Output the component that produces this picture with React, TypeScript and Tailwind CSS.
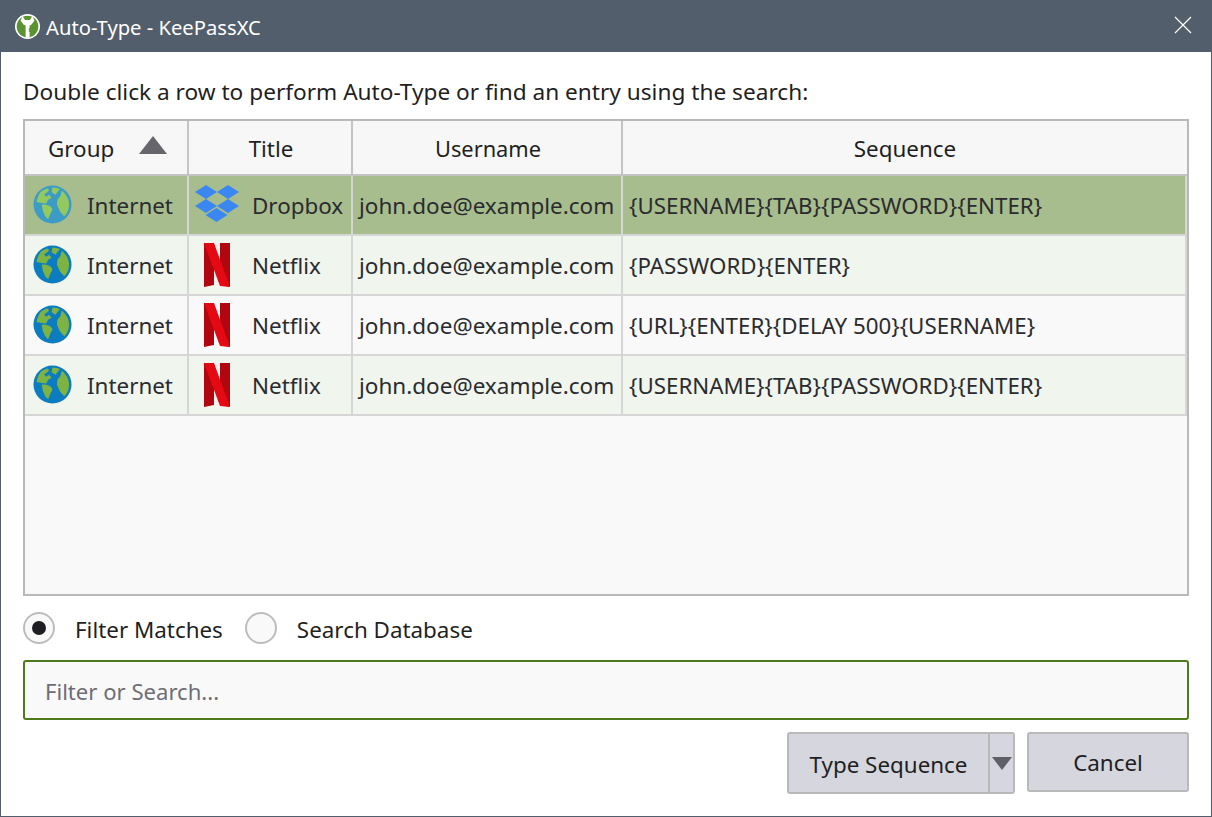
import React from 'react';

const Logo = () => (
  <svg width="25" height="25" viewBox="0 0 25 25">
    <circle cx="12.5" cy="12.5" r="12.5" fill="#fff" />
    <circle cx="12.5" cy="12.5" r="10.8" fill="#5b9330" />
    <path d="M7.6 2 L10 6 L15 6 L17.4 2 L19.4 6.5 L16.6 10.4 L14.6 11.6 L14.6 14 L13.4 15 L14.6 16 L13.4 17 L14.6 18 L14.6 23.4 L10.6 23.4 L10.6 11.6 L8.4 10.4 L5.6 6.5 Z" fill="#fff" />
  </svg>
);

const Globe = ({ selected }: { selected?: boolean }) => {
  const sea = selected ? '#3d9cc5' : '#0b7cbf';
  const land = selected ? '#93c95f' : '#7cb342';
  return (
    <svg width="39" height="39" viewBox="0 0 40 40" className="shrink-0 mt-[-1px]">
      <circle cx="20" cy="20" r="19.5" fill={sea} />
      <path d="M20 2.5 C23 2.5 26 3.4 27.5 4.2 L23 10 L19 7.5 Z" fill={land} />
      <path d="M8 7 C10 5 12.5 4 15 3.5 L16.5 5.5 L14 8 L11.5 9.5 L13.5 12 L16.5 10 L19 13 L15.5 15 L13.5 19 L9 18.5 L3.5 17.5 C4.5 13 6 9.5 8 7 Z" fill={land} />
      <path d="M29.5 6 C34 9.5 37 14.5 37 20 C37 25 35 29.5 32 32 L27.5 27 L24.5 20 L25 15 L28 11.5 Z" fill={land} />
      <path d="M9 20.5 C12 19.5 15.5 20.5 18.5 22.5 L20 25 L17.5 30 L15.5 35 L12.5 32 L10 26.5 Z" fill={land} />
    </svg>
  );
};

const Dropbox = () => (
  <svg width="46" height="40" viewBox="0 0 46 40" className="shrink-0 mt-[-2px]">
    <g fill="#3b87f0">
      <path d="M12 1 L23 8 L12 15 L1 8 Z" />
      <path d="M34 1 L45 8 L34 15 L23 8 Z" />
      <path d="M12 15 L23 22 L12 29 L1 22 Z" />
      <path d="M34 15 L45 22 L34 29 L23 22 Z" />
      <path d="M22.5 24 L33.5 31 L22.5 38 L11.5 31 Z" />
    </g>
  </svg>
);

const Netflix = () => (
  <svg width="46" height="44" viewBox="0 0 46 44" className="shrink-0 mt-[-1px]">
    <path d="M10 0 L20 0 L20 42 L10 44 Z" fill="#b1060f" />
    <path d="M26 0 L36 0 L36 44 L26 42 Z" fill="#b1060f" />
    <path d="M10 0 L20 0 L36 44 L26 43 Z" fill="#e50914" />
  </svg>
);

const Radio = ({ checked }: { checked?: boolean }) => (
  <span className="w-[32px] h-[32px] rounded-full border-2 border-[#bdbdbd] bg-[#f9f9f9] flex items-center justify-center shrink-0">
    {checked && <span className="w-[14px] h-[14px] rounded-full bg-[#1f1f23]" />}
  </span>
);

const rows = [
  { title: 'Dropbox', seq: '{USERNAME}{TAB}{PASSWORD}{ENTER}', bg: 'bg-[#a7bd8d]', selected: true },
  { title: 'Netflix', seq: '{PASSWORD}{ENTER}', bg: 'bg-[#f0f5ee]', selected: false },
  { title: 'Netflix', seq: '{URL}{ENTER}{DELAY 500}{USERNAME}', bg: 'bg-[#f9f9f9]', selected: false },
  { title: 'Netflix', seq: '{USERNAME}{TAB}{PASSWORD}{ENTER}', bg: 'bg-[#f0f5ee]', selected: false },
];

const columns = 'grid grid-cols-[164px_164px_270px_564px]';

const App = () => {
  return (
    <div className="w-[1212px] h-[817px] flex flex-col bg-white overflow-hidden border-x border-b border-[#525e6c] text-[22.4px] leading-[30px] text-[#1f1f23] font-['Noto_Sans',sans-serif]">
      <div className="h-[52px] shrink-0 bg-[#525e6c] flex items-center justify-between pl-[14px] pr-[19px] text-white">
        <div className="flex items-center gap-[6px]">
          <Logo />
          <span className="text-[20.2px] pt-[2px]">Auto-Type - KeePassXC</span>
        </div>
        <svg width="18" height="18" viewBox="0 0 18 18" className="mt-[-2px]">
          <path d="M1 1 L17 17 M17 1 L1 17" stroke="#fff" strokeWidth="1.2" />
        </svg>
      </div>

      <div className="flex-1 flex flex-col pl-[22px] pr-[22px]">
        <div className="h-[67px] shrink-0 pt-[25px] text-[22.65px]">Double click a row to perform Auto-Type or find an entry using the search:</div>

        <div className="h-[477px] shrink-0 border-2 border-[#b9b9b9] bg-[#f9f9f9]">
          <div className={`${columns} h-[55px] bg-[#f7f7f7] border-b-2 border-[#c4c4c4]`}>
            <div className="relative flex items-center pl-[23px] pt-[2px] border-r-2 border-[#c4c4c4]">
              Group
              <span className="absolute right-[20px] top-[15px] w-0 h-0 border-x-[14px] border-x-transparent border-b-[18px] border-b-[#66666c]" />
            </div>
            <div className="flex items-center justify-center pt-[2px] pl-[2px] border-r-2 border-[#c4c4c4]">Title</div>
            <div className="flex items-center justify-center pt-[2px] pl-[2px] border-r-2 border-[#c4c4c4] text-[21.8px]">Username</div>
            <div className="flex items-center justify-center pt-[2px]">Sequence</div>
          </div>
          {rows.map((row, i) => (
            <div key={i} className={`${columns} h-[60px] ${row.bg} text-[#2b2b2f] border-b-2 border-[#d6d6d6]`}>
              <div className="flex items-center pl-[8px] gap-[15px] border-r-2 border-[#d6d6d6]">
                <Globe selected={row.selected} />
                <span className="pt-[2px]">Internet</span>
              </div>
              <div className="flex items-center pl-[5px] gap-[12px] border-r-2 border-[#d6d6d6]">
                {row.title === 'Dropbox' ? <Dropbox /> : <Netflix />}
                <span className="pt-[2px]">{row.title}</span>
              </div>
              <div className="flex items-center pl-[6px] pt-[2px] border-r-2 border-[#d6d6d6] whitespace-nowrap text-[22.5px]">john.doe@example.com</div>
              <div className="flex items-center pl-[6px] pt-[2px] border-r-2 border-[#d6d6d6] whitespace-nowrap text-[22.3px]">{row.seq}</div>
            </div>
          ))}
        </div>

        <div className="h-[64px] shrink-0 flex items-center">
          <Radio checked />
          <span className="ml-[20px] pt-[3px]">Filter Matches</span>
          <span className="ml-[22px]"><Radio /></span>
          <span className="ml-[20px] pt-[3px]">Search Database</span>
        </div>

        <div className="h-[60px] shrink-0 border-2 border-[#4e7a1c] rounded-[3px] bg-[#f9f9f9] flex items-center pl-[20px] pt-[2px] text-[22.1px] text-[#6d6d78]">
          Filter or Search...
        </div>

        <div className="flex justify-end mt-[12px]">
          <div className="flex h-[62px]">
            <div className="w-[203px] border-2 border-[#b9b9b9] rounded-l-[3px] bg-[#d5d6de] flex items-center justify-center pt-[3px]">Type Sequence</div>
            <div className="w-[25px] border-2 border-l-0 border-[#b9b9b9] rounded-r-[3px] bg-[#d5d6de] flex items-center justify-center">
              <span className="w-0 h-0 border-x-[10px] border-x-transparent border-t-[13px] border-t-[#5f5f66]" />
            </div>
          </div>
          <div className="ml-[12px] w-[162px] h-[60px] border-2 border-[#b9b9b9] rounded-[3px] bg-[#d5d6de] flex items-center justify-center pt-[2px]">Cancel</div>
        </div>
      </div>
    </div>
  );
};

export default App;
